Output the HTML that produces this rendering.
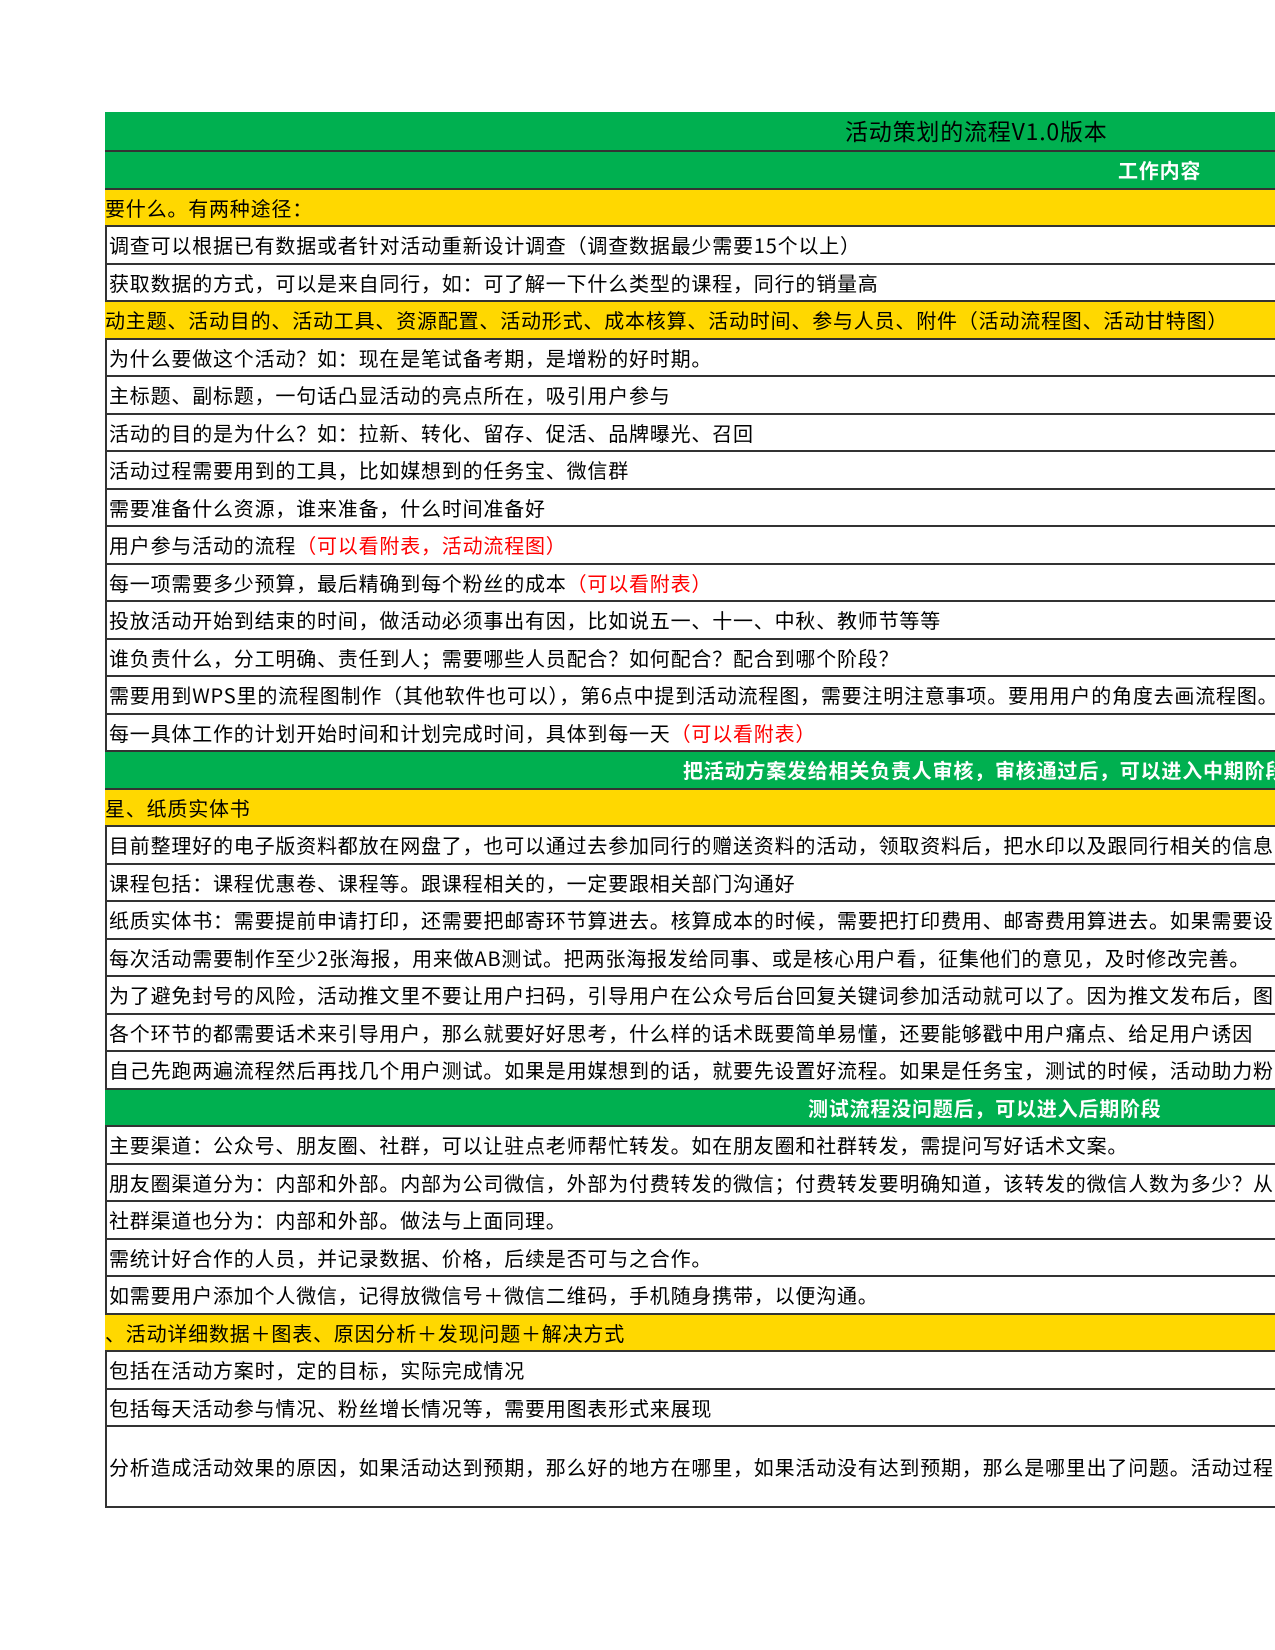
<!DOCTYPE html>
<html><head><meta charset="utf-8"><style>
body{margin:0;width:1275px;height:1650px;background:#fff;position:relative;overflow:hidden;font-family:"WenQuanYi Zen Hei","Noto Sans CJK SC",sans-serif;}
.r{position:absolute;left:105px;width:1175px;height:37.5px;box-sizing:border-box;border-top:2px solid #333;white-space:nowrap;overflow:hidden;font-size:20px;letter-spacing:0.8px;line-height:35px;color:#000}
.w{background:#fff;border-left:2px solid #333;padding-left:2px}
.y{background:#ffd800}
.g{background:#00b050;color:#fff;font-weight:bold}
.red{color:#f00}
</style></head><body>
<div class="r g" style="top:112px;border-top:none;font-weight:normal;color:#000;font-size:23px;line-height:37px"><span style="position:absolute;left:740px">活动策划的流程V1.0版本</span></div>
<div class="r g" style="top:150px"><span style="position:absolute;left:1013px">工作内容</span></div>
<div class="r y" style="top:187.5px">要什么。有两种途径：</div>
<div class="r w" style="top:225px">调查可以根据已有数据或者针对活动重新设计调查（调查数据最少需要15个以上）</div>
<div class="r w" style="top:262.5px">获取数据的方式，可以是来自同行，如：可了解一下什么类型的课程，同行的销量高</div>
<div class="r y" style="top:300px">动主题、活动目的、活动工具、资源配置、活动形式、成本核算、活动时间、参与人员、附件（活动流程图、活动甘特图）</div>
<div class="r w" style="top:337.5px">为什么要做这个活动？如：现在是笔试备考期，是增粉的好时期。</div>
<div class="r w" style="top:375px">主标题、副标题，一句话凸显活动的亮点所在，吸引用户参与</div>
<div class="r w" style="top:412.5px">活动的目的是为什么？如：拉新、转化、留存、促活、品牌曝光、召回</div>
<div class="r w" style="top:450px">活动过程需要用到的工具，比如媒想到的任务宝、微信群</div>
<div class="r w" style="top:487.5px">需要准备什么资源，谁来准备，什么时间准备好</div>
<div class="r w" style="top:525px">用户参与活动的流程<span class="red">（可以看附表，活动流程图）</span></div>
<div class="r w" style="top:562.5px">每一项需要多少预算，最后精确到每个粉丝的成本<span class="red">（可以看附表）</span></div>
<div class="r w" style="top:600px">投放活动开始到结束的时间，做活动必须事出有因，比如说五一、十一、中秋、教师节等等</div>
<div class="r w" style="top:637.5px">谁负责什么，分工明确、责任到人；需要哪些人员配合？如何配合？配合到哪个阶段？</div>
<div class="r w" style="top:675px">需要用到WPS里的流程图制作（其他软件也可以），第6点中提到活动流程图，需要注明注意事项。要用用户的角度去画流程图。</div>
<div class="r w" style="top:712.5px">每一具体工作的计划开始时间和计划完成时间，具体到每一天<span class="red">（可以看附表）</span></div>
<div class="r g" style="top:750px"><span style="position:absolute;left:578px">把活动方案发给相关负责人审核，审核通过后，可以进入中期阶段</span></div>
<div class="r y" style="top:787.5px">星、纸质实体书</div>
<div class="r w" style="top:825px">目前整理好的电子版资料都放在网盘了，也可以通过去参加同行的赠送资料的活动，领取资料后，把水印以及跟同行相关的信息</div>
<div class="r w" style="top:862.5px">课程包括：课程优惠卷、课程等。跟课程相关的，一定要跟相关部门沟通好</div>
<div class="r w" style="top:900px">纸质实体书：需要提前申请打印，还需要把邮寄环节算进去。核算成本的时候，需要把打印费用、邮寄费用算进去。如果需要设</div>
<div class="r w" style="top:937.5px">每次活动需要制作至少2张海报，用来做AB测试。把两张海报发给同事、或是核心用户看，征集他们的意见，及时修改完善。</div>
<div class="r w" style="top:975px">为了避免封号的风险，活动推文里不要让用户扫码，引导用户在公众号后台回复关键词参加活动就可以了。因为推文发布后，图</div>
<div class="r w" style="top:1012.5px">各个环节的都需要话术来引导用户，那么就要好好思考，什么样的话术既要简单易懂，还要能够戳中用户痛点、给足用户诱因</div>
<div class="r w" style="top:1050px">自己先跑两遍流程然后再找几个用户测试。如果是用媒想到的话，就要先设置好流程。如果是任务宝，测试的时候，活动助力粉</div>
<div class="r g" style="top:1087.5px"><span style="position:absolute;left:703px">测试流程没问题后，可以进入后期阶段</span></div>
<div class="r w" style="top:1125px">主要渠道：公众号、朋友圈、社群，可以让驻点老师帮忙转发。如在朋友圈和社群转发，需提问写好话术文案。</div>
<div class="r w" style="top:1162.5px">朋友圈渠道分为：内部和外部。内部为公司微信，外部为付费转发的微信；付费转发要明确知道，该转发的微信人数为多少？从</div>
<div class="r w" style="top:1200px">社群渠道也分为：内部和外部。做法与上面同理。</div>
<div class="r w" style="top:1237.5px">需统计好合作的人员，并记录数据、价格，后续是否可与之合作。</div>
<div class="r w" style="top:1275px">如需要用户添加个人微信，记得放微信号＋微信二维码，手机随身携带，以便沟通。</div>
<div class="r y" style="top:1312.5px">、活动详细数据＋图表、原因分析＋发现问题＋解决方式</div>
<div class="r w" style="top:1350px">包括在活动方案时，定的目标，实际完成情况</div>
<div class="r w" style="top:1387.5px">包括每天活动参与情况、粉丝增长情况等，需要用图表形式来展现</div>
<div class="r w" style="top:1425px;height:83px;border-bottom:2px solid #333;line-height:79px">分析造成活动效果的原因，如果活动达到预期，那么好的地方在哪里，如果活动没有达到预期，那么是哪里出了问题。活动过程</div>
</body></html>
